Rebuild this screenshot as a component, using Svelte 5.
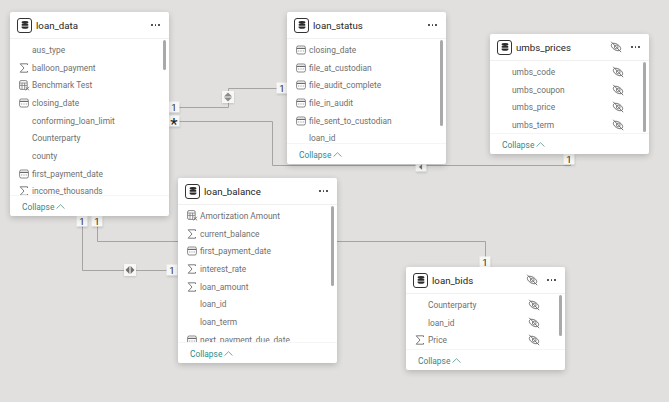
<script>
  // free canvas: table cards and the relationship lines are placed by their model coordinates
  const tables = [
    {
      name: 'loan_data', x: 10, y: 12, w: 159, h: 204, thumb: [1, 30],
      fields: [
        ['aus_type', ''], ['balloon_payment', 'sum'], ['Benchmark Test', 'calc'], ['closing_date', 'date'],
        ['conforming_loan_limit', ''], ['Counterparty', ''], ['county', ''], ['first_payment_date', 'date'],
        ['income_thousands', 'sum']
      ]
    },
    {
      name: 'loan_status', x: 287, y: 12, w: 159, h: 152, thumb: [1, 86],
      fields: [
        ['closing_date', 'date'], ['file_at_custodian', 'date'], ['file_audit_complete', 'date'],
        ['file_in_audit', 'date'], ['file_sent_to_custodian', 'date'], ['loan_id', '']
      ]
    },
    {
      name: 'umbs_prices', x: 490, y: 34, w: 159, h: 120, hidden: true, thumb: [1, 70],
      fields: [['umbs_code', ''], ['umbs_coupon', ''], ['umbs_price', ''], ['umbs_term', '']]
    },
    {
      name: 'loan_balance', x: 178, y: 178, w: 159, h: 185, thumb: [1, 80],
      fields: [
        ['Amortization Amount', 'calc'], ['current_balance', 'sum'], ['first_payment_date', 'date'],
        ['interest_rate', 'sum'], ['loan_amount', 'sum'], ['loan_id', ''], ['loan_term', ''],
        ['next_payment_due_date', 'date']
      ]
    },
    {
      name: 'loan_bids', x: 406, y: 267, w: 159, h: 103, hidden: true, thumb: [1, 41],
      fields: [['Counterparty', ''], ['loan_id', ''], ['Price', 'sum']]
    }
  ];

  const lines = [
    'M174 107.5H228.5V88.5H282',
    'M174 121.5H272.5V165.5H570.5V159',
    'M82.5 221V270.5H172',
    'M97.5 221V241.5H485.5V261'
  ];

  const badges = [
    { x: 174, y: 107, t: '1' },
    { x: 174, y: 121, t: '*', star: true },
    { x: 282, y: 88, t: '1' },
    { x: 569, y: 159, t: '1' },
    { x: 82, y: 221, t: '1' },
    { x: 97, y: 221, t: '1' },
    { x: 172, y: 270, t: '1' },
    { x: 485, y: 262, t: '1' }
  ];
</script>

{#snippet eye()}
  <svg class="eye" viewBox="0 0 12 12" width="12" height="12" fill="none" stroke="#666" stroke-width="0.8">
    <ellipse cx="6" cy="6" rx="5.2" ry="3" transform="rotate(32 6 6)" />
    <circle cx="6.2" cy="6" r="1.9" />
    <path d="M1.2 0.8L11.2 11.2" stroke-width="0.9" />
  </svg>
{/snippet}

{#snippet fieldIcon(kind)}
  {#if kind === 'sum'}
    <svg viewBox="0 0 10 10" width="10" height="10" fill="none" stroke="#5a5a5a" stroke-width="0.8">
      <path d="M8.5 2V0.8H1.2L5 5L1.2 9.2H8.5V8" />
    </svg>
  {:else if kind === 'date'}
    <svg viewBox="0 0 10 10" width="10" height="10" fill="none" stroke="#6a6a6a" stroke-width="0.8">
      <rect x="0.6" y="1" width="8.8" height="8" rx="1.6" />
      <path d="M0.8 3.4H9.2" stroke-width="1.2" />
      <path d="M2.4 6H3.2M4.6 6H5.4M6.8 6H7.6" stroke-width="1" />
    </svg>
  {:else if kind === 'calc'}
    <svg viewBox="0 0 11 11" width="11" height="11" fill="none" stroke="#6a6a6a" stroke-width="0.8">
      <rect x="0.6" y="0.6" width="7.6" height="8.8" rx="1.4" />
      <path d="M0.8 3H8M0.8 5.4H8M3 3V9.2M5.6 3V9.2" stroke-width="0.7" />
      <path d="M6.5 7L10.2 10.4M10.2 7L6.5 10.4" />
    </svg>
  {/if}
{/snippet}

<div class="canvas">
  <svg class="wires" width="669" height="402" fill="none" stroke="#a5a4a2" stroke-width="1">
    {#each lines as d}
      <path {d} />
    {/each}
  </svg>

  {#each badges as b}
    <span class="badge" class:star={b.star} style="left:{b.x}px;top:{b.y}px">{b.t}</span>
  {/each}

  <!-- cross filter markers sitting on the lines -->
  <span class="badge filter" style="left:228px;top:97px">
    <svg viewBox="0 0 10 10" width="10" height="10" fill="#8a8a8a"><path d="M5 0.5L9 4.4H1ZM5 9.5L1 5.6H9Z" /></svg>
  </span>
  <span class="badge filter" style="left:130px;top:270px">
    <svg viewBox="0 0 10 10" width="10" height="10" fill="#707070"><path d="M0.5 5L4.4 1V9ZM9.5 5L5.6 9V1Z" /></svg>
  </span>
  <span class="badge filter small" style="left:421px;top:167px">
    <svg viewBox="0 0 10 10" width="7" height="7" fill="#707070"><path d="M6.5 1V9L2 5Z" /></svg>
  </span>

  {#each tables as t}
    <section class="card" style="left:{t.x}px;top:{t.y}px;width:{t.w}px;height:{t.h}px">
      <header>
        <span class="dbicon">
          <svg viewBox="0 0 8 8" width="8" height="8" fill="#2b2b2b">
            <ellipse cx="4" cy="1.5" rx="3.4" ry="1.4" />
            <rect x="0.6" y="3" width="6.8" height="1.7" rx="0.7" />
            <path d="M0.6 5.4H7.4V6.4C7.4 7.3 5.8 7.8 4 7.8S0.6 7.3 0.6 6.4Z" />
          </svg>
        </span>
        <h2>{t.name}</h2>
        {#if t.hidden}
          <span class="head-eye">{@render eye()}</span>
        {/if}
        <span class="more"><i></i><i></i><i></i></span>
      </header>
      <div class="body">
        <ul>
          {#each t.fields as [label, kind]}
            <li>
              <span class="ficon">{@render fieldIcon(kind)}</span>
              <span class="label">{label}</span>
              {#if t.hidden}
                {@render eye()}
              {/if}
            </li>
          {/each}
        </ul>
        <span class="thumb" style="top:{t.thumb[0]}px;height:{t.thumb[1]}px"></span>
      </div>
      <footer>
        Collapse
        <svg viewBox="0 0 9 5" width="9" height="5" fill="none" stroke="#4f8f8c" stroke-width="0.8"><path d="M0.5 4.6L4.5 0.7L8.5 4.6" /></svg>
      </footer>
    </section>
  {/each}
</div>

<style>
  :global(body) {
    margin: 0;
    background: #e1e0de;
  }

  .canvas {
    position: relative;
    width: 669px;
    height: 402px;
    overflow: hidden;
    background: #e1e0de;
    font-family: Roboto, "Noto Sans", sans-serif;
  }

  .wires {
    position: absolute;
    left: 0;
    top: 0;
  }

  .badge {
    position: absolute;
    width: 11px;
    height: 11px;
    transform: translate(-50%, -50%);
    display: flex;
    align-items: center;
    justify-content: center;
    background: #f7f7f6;
    box-shadow: 0 1px 2px rgba(0, 0, 0, 0.14);
    font-size: 9.5px;
    line-height: 1;
    color: #252423;
  }

  .badge.star {
    font-size: 17px;
    padding-top: 6px;
    box-sizing: border-box;
  }

  .badge.filter {
    width: 12px;
    height: 12px;
  }

  .badge.small {
    width: 11px;
    height: 9px;
  }

  .card {
    position: absolute;
    display: flex;
    flex-direction: column;
    background: #fff;
    border-radius: 2px;
    box-shadow: 0 2px 6px rgba(0, 0, 0, 0.2);
  }

  header {
    flex: none;
    height: 26px;
    display: flex;
    align-items: center;
    padding: 0 9px 0 7px;
    border-bottom: 1px solid #f0f0f0;
  }

  .dbicon {
    width: 13px;
    height: 13px;
    border: 1px solid #333;
    border-radius: 3px;
    display: flex;
    align-items: center;
    justify-content: center;
    margin-right: 4px;
  }

  h2 {
    flex: 1;
    margin: 0;
    font-size: 9.7px;
    font-weight: 400;
    color: #252423;
  }

  .head-eye {
    margin-right: 9px;
    display: flex;
  }

  .more {
    display: flex;
    gap: 2px;
  }

  .more i {
    width: 1.6px;
    height: 1.6px;
    border-radius: 50%;
    background: #333;
  }

  .body {
    flex: 1;
    position: relative;
    min-height: 0;
    overflow: hidden;
  }

  ul {
    list-style: none;
    margin: 0;
    padding: 2px 0 0;
  }

  li {
    height: 17.7px;
    display: flex;
    align-items: center;
    padding-left: 9px;
    padding-right: 25px;
  }

  .ficon {
    width: 13px;
    flex: none;
    display: flex;
  }

  .label {
    flex: 1;
    font-size: 8.4px;
    color: #6f6f6f;
    white-space: nowrap;
  }

  .thumb {
    position: absolute;
    right: 3px;
    width: 3px;
    border-radius: 2px;
    background: #a9a9a9;
  }

  footer {
    flex: none;
    height: 21px;
    display: flex;
    align-items: center;
    gap: 2px;
    padding-left: 12px;
    padding-top: 1px;
    box-sizing: border-box;
    border-top: 1px solid #f5f5f5;
    font-size: 8.4px;
    color: #2e8b8b;
  }
</style>
